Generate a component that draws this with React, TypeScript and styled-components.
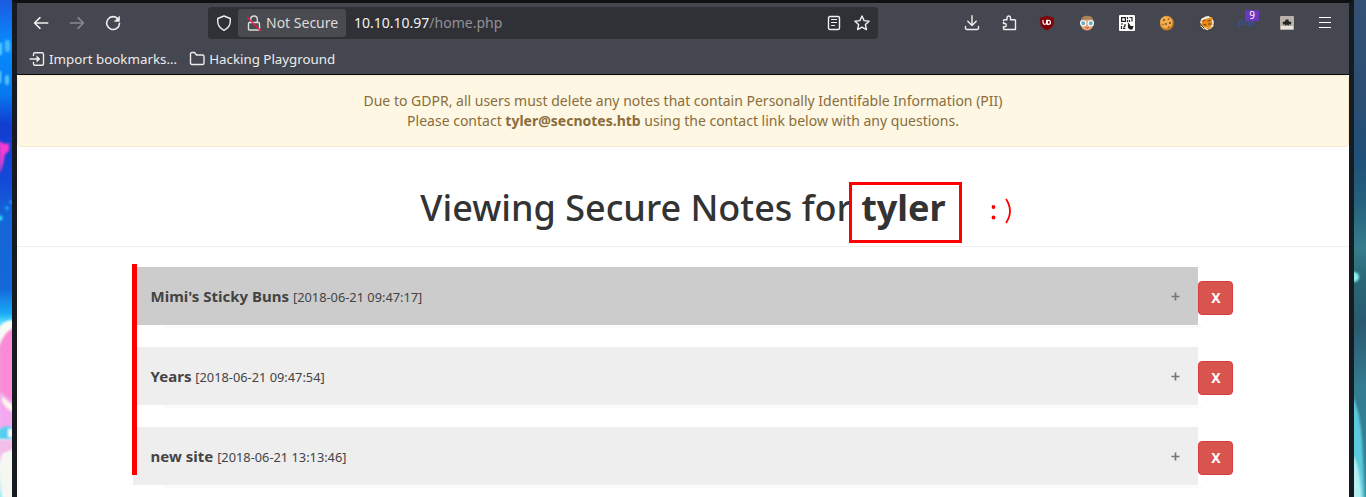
import React from 'react';
import styled, { createGlobalStyle, css } from 'styled-components';

const GlobalStyle = createGlobalStyle`
  *, *::before, *::after { box-sizing: border-box; }
  body { margin: 0; background: #fff; font-family: 'Noto Sans', sans-serif; overflow: hidden; }
`;

const Desktop = styled.div`
  position: relative;
  display: grid;
  grid-template-columns: 12px 1342px 12px;
  width: 1366px;
  height: 497px;
  overflow: hidden;
`;

const Wallpaper = styled.svg`
  display: block;
  width: 12px;
  height: 497px;
`;

const Window = styled.div`
  display: flex;
  flex-direction: column;
  height: 497px;
  border: solid #161b22;
  border-width: 3px 5px 0;
  border-top-color: #0f1012;
  overflow: hidden;
`;

const Chrome = styled.header`
  height: 72px;
  flex: none;
  background: #44474f;
  border-bottom: 1px solid #0c0c0d;
  color: #ececec;
`;

const NavBar = styled.div`
  display: flex;
  align-items: center;
  height: 40px;
  padding: 0 5px 0 6px;
`;

const ToolButton = styled.span<{ $w?: number; $dim?: boolean }>`
  position: relative;
  display: flex;
  flex: none;
  align-items: center;
  justify-content: center;
  width: ${p => p.$w ?? 36}px;
  height: 32px;
  color: ${p => (p.$dim ? '#87898e' : '#efefef')};
`;

const UrlBar = styled.div`
  display: flex;
  flex: none;
  align-items: center;
  width: 670px;
  height: 32px;
  margin: 0 76px 0 77px;
  padding: 0 2px;
  border-radius: 4px;
  background: #303136;
  font-size: 14px;
`;

const SecurityChip = styled.span`
  display: flex;
  align-items: center;
  width: 108px;
  height: 28px;
  padding: 0 0 1px 8px;
  gap: 4px;
  border-radius: 3px;
  background: #4a4b50;
  color: #dcdcdc;
  white-space: nowrap;
`;

const Address = styled.span`
  flex: 1;
  padding: 0 0 1px 8px;
  color: #f2f2f2;
  span { color: #929296; }
`;

const PhpMark = styled.i`
  color: #3d4d8c;
  font: italic 600 8px/8px 'DejaVu Sans', sans-serif;
`;

const Badge = styled.span`
  position: absolute;
  left: 19px;
  top: 3px;
  width: 14px;
  height: 11px;
  border-radius: 1px;
  background: #6b36c0;
  color: #fff;
  font-size: 10px;
  line-height: 11px;
  text-align: center;
`;

const BookmarksBar = styled.div`
  display: flex;
  align-items: center;
  height: 31px;
  padding: 1px 0 0 12px;
  gap: 12px;
  font-size: 13.33px;
`;

const Bookmark = styled.span`
  display: flex;
  align-items: center;
  gap: 4px;
  white-space: nowrap;
`;

const Page = styled.main`
  flex: 1;
  min-height: 0;
  background: #fff;
  color: #333;
`;

const Notice = styled.div`
  height: 72px;
  padding: 15px;
  border: 1px solid #faebcc;
  border-radius: 4px;
  background: #fdf7e3;
  color: #8a6d3b;
  font-size: 14px;
  line-height: 20px;
  text-align: center;
`;

const PageHeader = styled.div`
  height: 60px;
  margin: 40px 0 20px;
  padding-top: 1px;
  border-bottom: 1px solid #eee;
  text-align: center;
`;

const Title = styled.h1`
  margin: 0;
  font-size: 36px;
  font-weight: 500;
  line-height: 40px;
`;

const Marked = styled.b`
  position: relative;
`;

const RedBox = styled.span`
  position: absolute;
  left: -12.5px;
  top: -1px;
  width: 113px;
  height: 61px;
  border: 3px solid #f00;
`;

const Smiley = styled.svg`
  position: absolute;
  left: 127px;
  top: 14px;
`;

const Notes = styled.div`
  position: relative;
  display: flex;
  flex-direction: column;
  gap: 22px;
  margin-left: 116px;
`;

const NoteRow = styled.div`
  display: flex;
  align-items: flex-start;
  height: 58px;
`;

const NoteBar = styled.div<{ $active?: boolean }>`
  position: relative;
  display: flex;
  align-items: center;
  justify-content: space-between;
  width: 1065px;
  height: 58px;
  padding: 0 18px 0 17.6px;
  background: ${p => (p.$active ? '#ccc' : '#eee')};
  color: #444;
  font-size: 15px;
  line-height: 22px;
  &::after {
    content: '';
    position: absolute;
    left: 31px;
    right: -4px;
    bottom: -3px;
    height: 2px;
    background: linear-gradient(#f7f7f7, #fcfcfc);
  }
`;

const Stamp = styled.span`
  font-size: 12.8px;
`;

const Plus = styled.svg`
  width: 9px;
  height: 9px;
`;

const DeleteButton = styled.button`
  width: 35px;
  height: 34px;
  margin-top: 14px;
  padding: 0 0 0 1px;
  border: 1px solid #d43f3a;
  border-radius: 4px;
  background: #d9534f;
  color: #fff;
  font: bold 14px/20px 'Noto Sans', sans-serif;
`;

const MarkerLine = styled.span`
  position: absolute;
  left: -1.5px;
  top: -3.5px;
  width: 5px;
  height: 211px;
  background: #f00;
`;

const line = css`
  fill: none;
  stroke: currentColor;
  stroke-width: 1.4;
  stroke-linecap: round;
  stroke-linejoin: round;
`;
const Svg = styled.svg`
  display: block;
  flex: none;
  ${line}
`;

const Icon = ({ children, s = 16 }: { children: React.ReactNode; s?: number }) => (
  <Svg width={s} height={s} viewBox="0 0 16 16">{children}</Svg>
);

const notes = [
  { title: "Mimi's Sticky Buns", at: '2018-06-21 09:47:17', active: true },
  { title: 'Years', at: '2018-06-21 09:47:54' },
  { title: 'new site', at: '2018-06-21 13:13:46' },
];

const LeftWallpaper = () => (
  <Wallpaper viewBox="0 0 12 497">
    <defs>
      <linearGradient id="lw" x1="0" y1="0" x2="0" y2="1">
        <stop offset="0" stopColor="#1c5be0" />
        <stop offset=".09" stopColor="#078cff" />
        <stop offset=".19" stopColor="#0778f0" />
        <stop offset=".25" stopColor="#123dd0" />
        <stop offset=".36" stopColor="#1448d8" />
        <stop offset=".44" stopColor="#1566d8" />
        <stop offset=".58" stopColor="#1468da" />
        <stop offset=".63" stopColor="#1aa8f8" />
        <stop offset=".65" stopColor="#5ce0ff" />
        <stop offset=".68" stopColor="#c8f6ff" />
        <stop offset="1" stopColor="#f6f6f2" />
      </linearGradient>
      <filter id="soft" x="-50%" y="-10%" width="200%" height="120%"><feGaussianBlur stdDeviation=".8" /></filter>
    </defs>
    <rect width="12" height="497" fill="url(#lw)" />
    <g filter="url(#soft)">
      <rect x="-1" y="43" width="3" height="12" fill="#58ccff" />
      <rect x="5" y="40" width="5" height="12" rx="2" fill="#48baff" />
      <rect x="5" y="75" width="4" height="10" rx="2" fill="#54c6ff" />
      <rect x="-1" y="71" width="2" height="12" fill="#70e0ff" />
      <path d="M-1 141 L5 144 9 143V151L5 154 3 164 0 174Z" fill="#f53bd0" />
      <circle cx="7" cy="208" r="2" fill="#22a5ff" />
      <circle cx="0" cy="218" r="2.5" fill="#30e0ff" />
      <circle cx="11" cy="202" r="1.5" fill="#20b5ff" />
      <path d="M-1 327Q5 320 13 320V331Q4 334-1 346Z" fill="#f8fbf4" />
      <path d="M-1 346Q4 332 13 328V404Q5 400 3 394L-1 393Z" fill="#fb8bd6" />
      <path d="M-1 393L3 394 13 402V428L-1 431Z" fill="#f3a8ef" />
      <path d="M2 396Q8 402 13 405V412Q5 408 2 401Z" fill="#fff5ec" />
      <path d="M-1 429Q5 424 13 427V439H-1Z" fill="#54cff0" />
      <path d="M-1 440H13V452L3 454-1 463Z" fill="#f4bce9" />
      <path d="M13 449V500H3L0 470 2 454Z" fill="#f7f7f2" />
      <rect x="8" y="429" width="5" height="8" fill="#f6f7f2" />
      <path d="M-1 470Q0 490 3 500H-1Z" fill="#8eeef7" />
    </g>
  </Wallpaper>
);

const RightWallpaper = () => (
  <Wallpaper viewBox="0 0 12 497">
    <defs>
      <linearGradient id="rw" x1="0" y1="0" x2="0" y2="1">
        <stop offset="0" stopColor="#355274" />
        <stop offset=".2" stopColor="#2b4e72" />
        <stop offset=".32" stopColor="#205078" />
        <stop offset=".4" stopColor="#24607c" />
        <stop offset=".5" stopColor="#367d8c" />
        <stop offset=".56" stopColor="#296877" />
        <stop offset=".65" stopColor="#2a5a70" />
        <stop offset=".78" stopColor="#347c90" />
        <stop offset="1" stopColor="#348497" />
      </linearGradient>
    </defs>
    <rect width="12" height="497" fill="url(#rw)" />
    <g filter="url(#soft)">
      <circle cx="0" cy="277" r="5" fill="#8af2ef" />
      <path d="M-2 394Q6 411 8 440L11 500H-2Z" fill="#5acbdc" />
      <path d="M-2 455Q5 460 8 500H-2Z" fill="#b4f0f2" />
    </g>
  </Wallpaper>
);

export default function App() {
  return (
    <>
      <GlobalStyle />
      <Desktop>
        <LeftWallpaper />
        <Window>
          <Chrome>
            <NavBar>
              <ToolButton><Icon><path d="M14.7 8H1.5M7 2.7L1.5 8l5.500 5.300" strokeWidth="1.600" /></Icon></ToolButton>
              <ToolButton $dim><Icon><path d="M1.3 8h13.200M9 2.700L14.500 8 9 13.300" strokeWidth="1.600" /></Icon></ToolButton>
              <ToolButton>
                <Icon><path d="M13.2 4.2A6.4 6.4 0 1 0 14.5 8.2" strokeWidth="1.600" /><path d="M14.4 1.7v4.6H9.8z" fill="currentColor" strokeWidth=".8" /></Icon>
              </ToolButton>
              <UrlBar>
                <ToolButton $w={28}>
                  <Icon><path d="M8 1l6.3 2.5v2.8c0 4-2.2 7-6.3 9-4.1-2-6.3-5-6.3-9V3.5z" /></Icon>
                </ToolButton>
                <SecurityChip>
                  <Icon>
                    <path d="M4.700 7V4.300a3.300 3.300 0 0 1 6.600 0V7M3.500 7.500h9q1 0 1 1V14q0 1-1 1h-9q-1 0-1-1V8.500q0-1 1-1z" />
                    <path d="M2 3l12.500 12.500" stroke="#f01848" />
                  </Icon>
                  Not Secure
                </SecurityChip>
                <Address>10.10.10.97<span>/home.php</span></Address>
                <ToolButton $w={28}>
                  <Icon><rect x="2.500" y="1.500" width="11" height="13" rx="1.500" /><path d="M5.500 4.500h5M5.500 7.500h5M5.500 10.500h3" strokeWidth="1.200" /></Icon>
                </ToolButton>
                <ToolButton $w={28}>
                  <Icon><path d="M8 1l2.100 4.600 5 .600-3.700 3.400 1 5L8 12.100l-4.400 2.500 1-5L.900 6.200l5-.600z" /></Icon>
                </ToolButton>
              </UrlBar>
              <ToolButton $w={36}><Icon><path d="M8 .700v9.600M3.800 6.200L8 10.400l4.200-4.200M1.500 11.500v1.700q0 1.300 1.300 1.300h10.400q1.300 0 1.300-1.300v-1.700" /></Icon></ToolButton>
              <ToolButton $w={38}>
                <Icon><path d="M2.500 5.700q0-1 1-1H6V2.700a1.700 1.700 0 0 1 3.500 0v2h4q1 0 1 1V14.500H3.200q-.700 0-.700-.700V11.800H4a1.700 1.700 0 0 0 0-3.300H2.500V7.500" /></Icon>
              </ToolButton>
              <ToolButton $w={38}>
                <Svg width="16" height="16" viewBox="0 0 16 16">
                  <path d="M8 .5Q11 2.200 15 2.500V8q-.500 5-7 7.500Q1.500 13 1 8V2.500Q5 2.200 8 .500z" fill="#800008" stroke="#65333a" strokeWidth=".6" />
                  <path d="M4 5.300v2.300a1.800 1.800 0 0 0 3.600 0V5.300M8.300 5.300h1.200a2 2 0 0 1 0 4H8.300z" stroke="#fff" strokeWidth="1.200" />
                </Svg>
              </ToolButton>
              <ToolButton $w={42}>
                <Svg width="16" height="16" viewBox="0 0 16 16">
                  <g stroke="none">
                    <ellipse cx="8" cy="8.500" rx="6.600" ry="7" fill="#e9a577" />
                    <path d="M1.500 8Q1 1 8 .800T14.500 8L12.500 4.700 7 4.500 3 6z" fill="#aa8257" />
                    <path d="M5.500 12.500h5l-2.500 1.300z" fill="#b95d48" />
                  </g>
                  <circle cx="4.200" cy="8.200" r="2.600" fill="#65aec5" stroke="#eef7fa" strokeWidth="1.300" />
                  <circle cx="11.800" cy="8.200" r="2.600" fill="#65aec5" stroke="#eef7fa" strokeWidth="1.300" />
                </Svg>
              </ToolButton>
              <ToolButton $w={38}>
                <Svg width="16" height="16" viewBox="0 0 16 16">
                  <rect width="16" height="16" rx="1" fill="#fff" stroke="none" />
                  <g stroke="#222" strokeWidth="1.200" strokeLinecap="butt" strokeLinejoin="miter">
                    <path d="M2.600 2.600h3.800v3.800h-3.800zM8.500 2v2M8.500 5v2M10.500 2.500h3M13 2.500v4M10.500 5v2M2 9h2M6 9v1.500M2.500 11v3M4 13.500h2.500M6.500 10.500l-2 2" />
                    <path d="M9.500 9v3.500l1.500 1.500h2l.800-2.500h-2.300z" fill="#222" />
                  </g>
                </Svg>
              </ToolButton>
              <ToolButton $w={42}>
                <Svg width="16" height="16" viewBox="0 0 16 16">
                  <g stroke="none">
                    <path d="M5 1.300Q9 0 12 2.300t2.800 6Q14.500 13 11 14.700t-7-.200Q.500 12 1 8t4-6.700z" fill="#c67a20" />
                    <path d="M5 1.600Q9 .700 11.700 3T13 9.500q-1.500 4-6 4T1.300 8.500 5 1.600z" fill="#efad4c" />
                    <g fill="#76401b"><circle cx="5" cy="5" r=".9" /><circle cx="9.500" cy="4" r=".8" /><circle cx="11" cy="8" r="1" /><circle cx="7" cy="9" r=".9" /><circle cx="4" cy="9.500" r=".7" /><circle cx="9.500" cy="12" r=".8" /></g>
                  </g>
                </Svg>
              </ToolButton>
              <ToolButton $w={38}>
                <Svg width="16" height="16" viewBox="0 0 16 16">
                  <circle cx="8" cy="8" r="7.200" fill="#f4f1e9" stroke="#33343a" strokeWidth=".8" strokeDasharray="2 2" />
                  <path d="M3 5.500L8 3.500 13.500 2l-.500 4 .500 4-3.500 2.500-5 0-3-2.500z" fill="#ec8a13" stroke="none" />
                  <path d="M4 6l2-1M9 6l2-.500M5 9.500l2 .500M9.500 9l2 0M1 8l1 2 3 3M3 2.500l3-1" stroke="#443122" strokeWidth=".9" />
                  <path d="M8 13.500l4-1" stroke="#f19519" />
                </Svg>
              </ToolButton>
              <ToolButton $w={42}>
                <PhpMark>php</PhpMark>
                <Badge>9</Badge>
              </ToolButton>
              <ToolButton $w={38}>
                <Svg width="14" height="14" viewBox="0 0 14 14">
                  <rect width="14" height="14" rx="1" fill="#b9b1aa" stroke="none" />
                  <rect x="1" y="10" width="12" height="3" fill="#e8e2dc" stroke="none" />
                  <path d="M2.500 6L5 5.500 6 3l1 1 1-1 1 2.500 2.500.500-1 3-1.500-1-.500 2-1.500-1.500-1.500 1.500-.500-2-1.500 1z" fill="#282624" stroke="none" />
                </Svg>
              </ToolButton>
              <ToolButton $w={38}><Icon><path d="M2 3.500h12M2 8.500h12M2 13.500h12" transform="translate(0 -1)" stroke="#fff" strokeWidth="1" strokeLinecap="butt" /></Icon></ToolButton>
            </NavBar>
            <BookmarksBar>
              <Bookmark>
                <Icon><path d="M4.500 4.500V3.200q0-1.500 1.500-1.500h7q1.500 0 1.500 1.500v9.600q0 1.500-1.500 1.500H6q-1.500 0-1.500-1.500v-1.300M1 8h8" /><path d="M8 5.200L11 8l-3 2.800z" fill="currentColor" strokeWidth=".6" /></Icon>
                Import bookmarks...
              </Bookmark>
              <Bookmark>
                <Icon><path d="M1.500 3q0-1.500 1.500-1.500h2.500L7.500 4H13.500Q15 4 15 5.500V12q0 1.500-1.500 1.500h-10.500Q1.500 13.500 1.500 12z" /></Icon>
                Hacking Playground
              </Bookmark>
            </BookmarksBar>
          </Chrome>
          <Page>
            <Notice>
              Due to GDPR, all users must delete any notes that contain Personally Identifable Information (PII)<br />
              Please contact <b>tyler@secnotes.htb</b> using the contact link below with any questions.
            </Notice>
            <PageHeader>
              <Title>
                Viewing Secure Notes for{' '}
                <Marked>
                  tyler
                  <RedBox />
                  <Smiley width="26" height="34" viewBox="0 0 26 34">
                    <circle cx="5.500" cy="10" r="1.900" fill="#f00" />
                    <circle cx="5.500" cy="20.500" r="1.900" fill="#f00" />
                    <path d="M18 2q8 12 0 24" fill="none" stroke="#f00" strokeWidth="1.800" />
                  </Smiley>
                </Marked>
              </Title>
            </PageHeader>
            <Notes>
              {notes.map(n => (
                <NoteRow key={n.title}>
                  <NoteBar $active={n.active}>
                    <span><b>{n.title}</b> <Stamp>[{n.at}]</Stamp></span>
                    <Plus viewBox="0 0 9 9" aria-label="expand"><path d="M.5 4.500h8M4.500 .500v8" stroke="#777" strokeWidth="1.700" /></Plus>
                  </NoteBar>
                  <DeleteButton>X</DeleteButton>
                </NoteRow>
              ))}
              <MarkerLine />
            </Notes>
          </Page>
        </Window>
        <RightWallpaper />
      </Desktop>
    </>
  );
}
